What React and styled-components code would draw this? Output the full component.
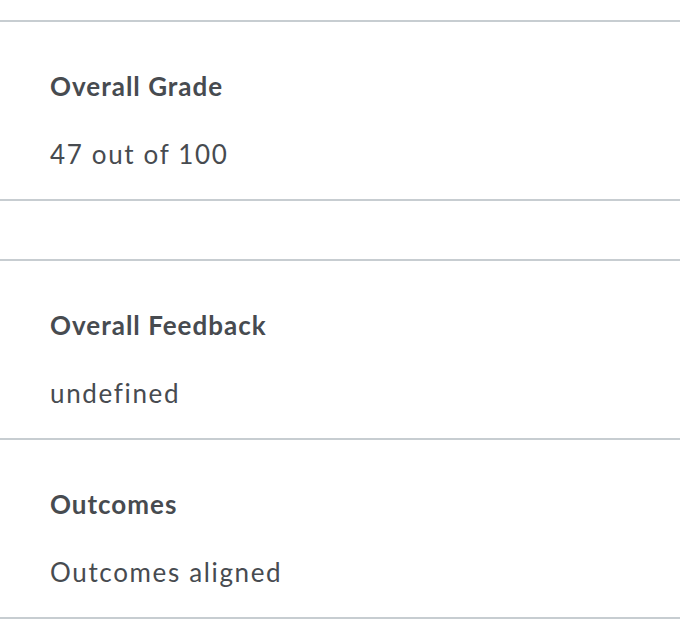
import React from "react";
import styled, { createGlobalStyle } from "styled-components";

const Global = createGlobalStyle`
  body {
    margin: 0;
    background: #ffffff;
    font-family: Lato, "Liberation Sans", sans-serif;
  }
`;

const Page = styled.div`
  padding-top: 20px;
`;

const Section = styled.section`
  border-top: ${(p) => (p.$noTop ? "none" : "2px solid #c7cdd1")};
  border-bottom: 2px solid #c7cdd1;
  margin-top: ${(p) => (p.$gap ? "58px" : "0")};
  padding: 48px 50px 29px;
`;

const Heading = styled.h2`
  margin: 0;
  font-size: 26px;
  line-height: 32px;
  font-weight: 700;
  letter-spacing: 1px;
  color: #474b50;
`;

const Body = styled.p`
  margin: 36px 0 0;
  font-size: 26px;
  line-height: 32px;
  font-weight: 400;
  letter-spacing: 1.65px;
  color: #474b50;
`;

export default function App() {
  return (
    <Page>
      <Global />
      <Section>
        <Heading>Overall Grade</Heading>
        <Body>47 out of 100</Body>
      </Section>
      <Section $gap>
        <Heading>Overall Feedback</Heading>
        <Body>undefined</Body>
      </Section>
      <Section $noTop>
        <Heading>Outcomes</Heading>
        <Body>Outcomes aligned</Body>
      </Section>
    </Page>
  );
}
